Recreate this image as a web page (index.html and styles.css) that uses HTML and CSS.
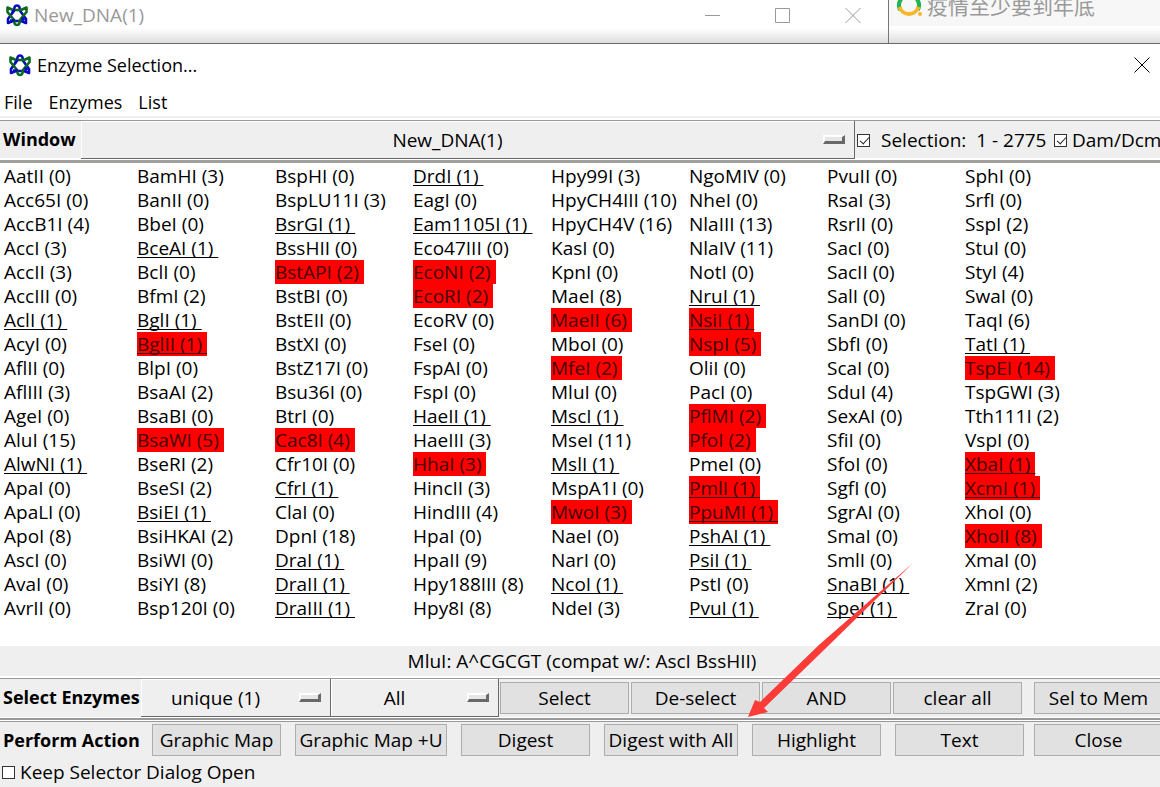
FILE: index.html
```
<!DOCTYPE html>
<html lang="en">
<head>
<meta charset="utf-8">
<title>Enzyme Selection</title>
<link rel="stylesheet" href="styles.css">
</head>
<body>
<svg class="defs" aria-hidden="true">
  <symbol id="logo" viewBox="0 0 24 24">
    <g fill="none" stroke-width="2.600" stroke-linejoin="round">
      <path d="M12 2.500C9.500 2.500 9 5 9.500 7L3 16v4l5-2h8l5 2v-4L14.500 7C15 5 14.500 2.500 12 2.500Z" stroke="#0a0ac0"/>
      <path d="M12 22C9.500 22 9 19.500 9.500 17.500L2.500 9V4.500L8 7h8l5.500-2.500V9L14.500 17.500C15 19.500 14.500 22 12 22Z" stroke="#0b6b1c"/>
      <path d="M9.500 6.500L7 10M17 14.500l2 3M5 17.500h5" stroke="#0a0ac0"/>
    </g>
  </symbol>
</svg>

<div class="desktop">
  <section class="back-window">
    <svg class="logo"><use href="#logo"/></svg>
    <span class="back-title">New_DNA(1)</span>
    <div class="controls">
      <button type="button" aria-label="Minimize"><svg viewBox="0 0 16 16"><path d="M0 8.500h15"/></svg></button>
      <button type="button" aria-label="Maximize"><svg viewBox="0 0 16 16"><path d="M.5 1.500h14v14H.5z"/></svg></button>
      <button type="button" aria-label="Close"><svg viewBox="0 0 16 16"><path d="M.5 1l15 15M15.500 1L.5 16"/></svg></button>
    </div>
  </section>
  <section class="browser">
    <div class="tab">
      <svg class="ring" viewBox="0 0 26 26"><path d="M3.200 18A10 10 0 1 1 20.800 18" stroke="#21b351"/><path d="M2.500 15a10 10 0 0 0 19 0" stroke="#f8b62b"/><circle cx="23" cy="22" r="2" fill="#f8b62b" stroke="none"/></svg>
      <span>疫情至少要到年底</span>
    </div>
  </section>
</div>

<main class="dialog">
  <header class="titlebar">
    <svg class="logo"><use href="#logo"/></svg>
    <h1>Enzyme Selection...</h1>
    <button type="button" class="close" aria-label="Close dialog"><svg viewBox="0 0 16 16"><path d="M.5.5l15 15M15.500.5l-15 15"/></svg></button>
  </header>
  <nav class="menu">
    <button type="button">File</button>
    <button type="button">Enzymes</button>
    <button type="button">List</button>
  </nav>

  <div class="bar window-bar">
    <label class="caption" for="win">Window</label>
    <div class="option option-window"><select id="win"><option>New_DNA(1)</option></select><i></i></div>
    <label class="check range"><input type="checkbox" checked>Selection:&nbsp; 1 - 2775</label>
    <label class="check"><input type="checkbox" checked>Dam/Dcm</label>
  </div>

  <div class="enzymes">
    <ul>
      <li>AatII (0)</li><li>Acc65I (0)</li><li>AccB1I (4)</li><li>AccI (3)</li><li>AccII (3)</li><li>AccIII (0)</li><li class="u">AclI (1)&nbsp;</li><li>AcyI (0)</li><li>AflII (0)</li><li>AflIII (3)</li><li>AgeI (0)</li><li>AluI (15)</li><li class="u">AlwNI (1)&nbsp;</li><li>ApaI (0)</li><li>ApaLI (0)</li><li>ApoI (8)</li><li>AscI (0)</li><li>AvaI (0)</li><li>AvrII (0)</li>
    </ul>
    <ul>
      <li>BamHI (3)</li><li>BanII (0)</li><li>BbeI (0)</li><li class="u">BceAI (1)&nbsp;</li><li>BclI (0)</li><li>BfmI (2)</li><li class="u">BglI (1)&nbsp;</li><li class="u on">BglII (1)&nbsp;</li><li>BlpI (0)</li><li>BsaAI (2)</li><li>BsaBI (0)</li><li class="on">BsaWI (5)&nbsp;</li><li>BseRI (2)</li><li>BseSI (2)</li><li class="u">BsiEI (1)&nbsp;</li><li>BsiHKAI (2)</li><li>BsiWI (0)</li><li>BsiYI (8)</li><li>Bsp120I (0)</li>
    </ul>
    <ul>
      <li>BspHI (0)</li><li>BspLU11I (3)</li><li class="u">BsrGI (1)&nbsp;</li><li>BssHII (0)</li><li class="on">BstAPI (2)&nbsp;</li><li>BstBI (0)</li><li>BstEII (0)</li><li>BstXI (0)</li><li>BstZ17I (0)</li><li>Bsu36I (0)</li><li>BtrI (0)</li><li class="on">Cac8I (4)&nbsp;</li><li>Cfr10I (0)</li><li class="u">CfrI (1)&nbsp;</li><li>ClaI (0)</li><li>DpnI (18)</li><li class="u">DraI (1)&nbsp;</li><li class="u">DraII (1)&nbsp;</li><li class="u">DraIII (1)&nbsp;</li>
    </ul>
    <ul>
      <li class="u">DrdI (1)&nbsp;</li><li>EagI (0)</li><li class="u">Eam1105I (1)&nbsp;</li><li>Eco47III (0)</li><li class="on">EcoNI (2)&nbsp;</li><li class="on">EcoRI (2)&nbsp;</li><li>EcoRV (0)</li><li>FseI (0)</li><li>FspAI (0)</li><li>FspI (0)</li><li class="u">HaeII (1)&nbsp;</li><li>HaeIII (3)</li><li class="on">HhaI (3)&nbsp;</li><li>HincII (3)</li><li>HindIII (4)</li><li>HpaI (0)</li><li>HpaII (9)</li><li>Hpy188III (8)</li><li>Hpy8I (8)</li>
    </ul>
    <ul>
      <li>Hpy99I (3)</li><li>HpyCH4III (10)</li><li>HpyCH4V (16)</li><li>KasI (0)</li><li>KpnI (0)</li><li>MaeI (8)</li><li class="on">MaeII (6)&nbsp;</li><li>MboI (0)</li><li class="on">MfeI (2)&nbsp;</li><li>MluI (0)</li><li class="u">MscI (1)&nbsp;</li><li>MseI (11)</li><li class="u">MslI (1)&nbsp;</li><li>MspA1I (0)</li><li class="on">MwoI (3)&nbsp;</li><li>NaeI (0)</li><li>NarI (0)</li><li class="u">NcoI (1)&nbsp;</li><li>NdeI (3)</li>
    </ul>
    <ul>
      <li>NgoMIV (0)</li><li>NheI (0)</li><li>NlaIII (13)</li><li>NlaIV (11)</li><li>NotI (0)</li><li class="u">NruI (1)&nbsp;</li><li class="u on">NsiI (1)&nbsp;</li><li class="on">NspI (5)&nbsp;</li><li>OliI (0)</li><li>PacI (0)</li><li class="on">PflMI (2)&nbsp;</li><li class="on">PfoI (2)&nbsp;</li><li>PmeI (0)</li><li class="u on">PmlI (1)&nbsp;</li><li class="u on">PpuMI (1)&nbsp;</li><li class="u">PshAI (1)&nbsp;</li><li class="u">PsiI (1)&nbsp;</li><li>PstI (0)</li><li class="u">PvuI (1)&nbsp;</li>
    </ul>
    <ul>
      <li>PvuII (0)</li><li>RsaI (3)</li><li>RsrII (0)</li><li>SacI (0)</li><li>SacII (0)</li><li>SalI (0)</li><li>SanDI (0)</li><li>SbfI (0)</li><li>ScaI (0)</li><li>SduI (4)</li><li>SexAI (0)</li><li>SfiI (0)</li><li>SfoI (0)</li><li>SgfI (0)</li><li>SgrAI (0)</li><li>SmaI (0)</li><li>SmlI (0)</li><li class="u">SnaBI (1)&nbsp;</li><li class="u">SpeI (1)&nbsp;</li>
    </ul>
    <ul>
      <li>SphI (0)</li><li>SrfI (0)</li><li>SspI (2)</li><li>StuI (0)</li><li>StyI (4)</li><li>SwaI (0)</li><li>TaqI (6)</li><li class="u">TatI (1)&nbsp;</li><li class="on">TspEI (14)&nbsp;</li><li>TspGWI (3)</li><li>Tth111I (2)</li><li>VspI (0)</li><li class="u on">XbaI (1)&nbsp;</li><li class="u on">XcmI (1)&nbsp;</li><li>XhoI (0)</li><li class="on">XhoII (8)&nbsp;</li><li>XmaI (0)</li><li>XmnI (2)</li><li>ZraI (0)</li>
    </ul>
  </div>

  <p class="status">MluI: A^CGCGT (compat w/: AscI BssHII)</p>

  <div class="bar select-bar">
    <label class="caption" for="kind">Select Enzymes</label>
    <div class="option option-kind"><select id="kind"><option>unique (1)</option></select><i></i></div>
    <div class="option option-all"><select aria-label="Enzyme set"><option>All</option></select><i></i></div>
    <div class="buttons">
      <button type="button">Select</button>
      <button type="button">De-select</button>
      <button type="button">AND</button>
      <button type="button">clear all</button>
    </div>
    <button type="button" class="last">Sel to Mem</button>
  </div>

  <div class="action-bar">
    <span class="caption">Perform Action</span>
    <div class="buttons">
      <button type="button">Graphic Map</button>
      <button type="button" class="wide">Graphic Map +U</button>
      <button type="button">Digest</button>
      <button type="button" class="medium">Digest with All</button>
      <button type="button">Highlight</button>
      <button type="button">Text</button>
    </div>
    <button type="button" class="last">Close</button>
  </div>
  <label class="keep"><input type="checkbox">Keep Selector Dialog Open</label>
</main>

<svg class="arrow" viewBox="0 0 166 156" aria-hidden="true"><path d="M165 0L72 81 12 139 7 137 0 154l20-5-4-4L77 86z" fill="#fb3b38"/></svg>
</body>
</html>
```

FILE: styles.css
```
* { box-sizing: border-box; }

body {
  margin: 0;
  min-height: 100vh;
  display: flex;
  flex-direction: column;
  position: relative;
  overflow: hidden;
  background: #efefef;
  color: #000;
  font: 19px/24px "Open Sans", "Noto Sans CJK SC", sans-serif;
  font-variant-ligatures: none;
}

button, select, input { font: inherit; color: inherit; margin: 0; }
h1, p, ul { margin: 0; padding: 0; font: inherit; list-style: none; }
.defs { position: absolute; width: 0; height: 0; }
.logo { width: 24px; height: 24px; flex: none; }

.desktop { display: flex; height: 43px; overflow: hidden; }
.back-window {
  flex: 0 0 889px;
  display: flex;
  align-items: flex-start;
  padding: 3px 27px 0 5px;
  gap: 5px;
  color: #999;
  background: linear-gradient(#fff 28px, #dedede);
  border-right: 1px solid #777;
}
.controls { margin-left: auto; display: flex; gap: 54px; padding-top: 4px; }
.controls button { width: 16px; height: 16px; padding: 0; border: 0; background: none; display: flex; }
.controls svg, .close svg { width: 16px; height: 16px; fill: none; stroke: #999; overflow: visible; }
.browser { flex: 1; background: linear-gradient(#fff 28px, #dedede); }
.tab {
  height: 26px;
  display: flex;
  align-items: flex-end;
  gap: 4px;
  padding: 0 0 8px 8px;
  background: #f7f7f7;
  color: #999;
  font-size: 21px;
  white-space: nowrap;
}
.ring { width: 26px; height: 26px; fill: none; stroke-width: 4; flex: none; }

.dialog { border-top: 1px solid #6a6a6a; background: #efefef; flex: 1; }
.titlebar { display: flex; align-items: center; gap: 5px; height: 43px; padding: 0 10px 1px 8px; background: #fff; font-size: 18px; }
.close { margin-left: auto; width: 16px; height: 16px; padding: 0; border: 0; background: none; display: flex; }
.close svg { stroke: #000; }
.menu { display: flex; gap: 16px; height: 29px; padding: 2px 4px; background: #fff; font-size: 18px; }
.menu button { padding: 0; border: 0; background: none; }

.bar { display: flex; align-items: stretch; white-space: nowrap; }
.window-bar { height: 47px; background: linear-gradient(#efefef 2px, #fff 2px 4px, #999 4px 5px, #efefef 5px 42px, #fff 42px 44px, #a0a09c 44px); padding: 5px 0 4px; }
.window-bar > * { height: 38px; }
.caption { flex: none; padding-left: 3px; font-size: 18px; font-weight: 700; line-height: 37px; }
.window-bar .caption { width: 81px; }
.option { position: relative; flex: none; display: flex; border: solid #696969; border-width: 0 1px 1px 0; box-shadow: inset 1px 1px #fff; }
.option select { width: 100%; padding: 0 40px 0 0; border: 0; background: none; appearance: none; text-align: center; text-align-last: center; outline: 0; }
.option i { position: absolute; right: 9px; top: 14px; width: 22px; height: 9px; background: #e6e6e6; border: solid; border-width: 2px 3px 3px 2px; border-color: #fff #696969 #696969 #fff; }
.option-window { width: 774px; }
.check, .keep { display: flex; align-items: center; }
.check { flex: none; padding-left: 2px; gap: 5px; }
.range { gap: 11px; width: 197px; }
input[type="checkbox"] {
  appearance: none;
  flex: none;
  width: 13px;
  height: 13px;
  border: 1px solid #333;
  background: #fff;
}
input[type="checkbox"]:checked::before {
  content: "";
  display: block;
  width: 8px;
  height: 4px;
  margin: 2px 0 0 2px;
  border: solid #222;
  border-width: 0 0 1px 1px;
  transform: rotate(-48deg);
}

.enzymes {
  display: grid;
  grid-template-columns: 133px repeat(7, 138px);
  padding: 1px 0 26px 4px;
  background: #fff;
  white-space: nowrap;
}
.enzymes li { width: fit-content; height: 24px; }
.u { text-decoration: underline 1px; text-underline-offset: 2px; text-decoration-skip-ink: none; }
.on { background: #f00; color: #400; }

.status { height: 30px; padding: 3px 0 0 4px; text-align: center; }

.select-bar { height: 45px; background: linear-gradient(#fff 2px, #999 2px 3px, #efefef 3px 41px, #fff 41px 42px, #999 42px 44px, #fff 44px); padding: 3px 0 4px; }
.select-bar .caption { width: 141px; }
.option-kind { width: 190px; }
.option-all { width: 168px; }
.buttons { display: flex; flex: none; }
.select-bar .buttons { gap: 2px; padding: 3px 0 0 1px; }
.buttons button, .last {
  flex: none;
  width: 129px;
  height: 32px;
  padding: 0;
  border: 1px solid #adadad;
  background: #e1e1e1;
  line-height: 24px;
  white-space: nowrap;
}
.last { margin-left: 12px; }
.select-bar .last { margin-top: 3px; }

.action-bar { display: flex; height: 36px; padding-top: 2px; border-top: 1px solid #999; white-space: nowrap; }
.action-bar .caption { width: 152px; line-height: 32px; }
.action-bar .buttons { gap: 14px; }
.action-bar .wide { width: 152px; }
.action-bar .medium { width: 134px; }
.action-bar .last { margin-left: 10px; }
.keep { gap: 5px; padding: 3px 2px; }

.arrow { position: absolute; left: 748px; top: 563px; width: 166px; height: 156px; pointer-events: none; }
```
